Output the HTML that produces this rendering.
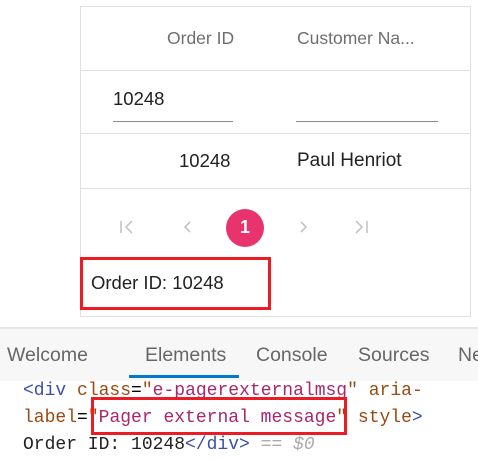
<!DOCTYPE html>
<html><head><style>
body{margin:0;width:478px;height:462px;background:#fff;position:relative;overflow:hidden;font-family:"Liberation Sans",sans-serif}
.a{position:absolute}
.grid{left:80px;top:6px;width:389px;height:309px;border:1px solid #e0e0e0}
.hl{left:81px;width:389px;height:1px;background:#e0e0e0}
.t{font-size:18.5px;color:#212121;white-space:nowrap}
.h{color:#6f6f6f;font-size:17.5px}
.red{border:3px solid #ed1c24;box-sizing:border-box}
.tab{font-size:19.5px;color:#666;top:344px}
.code{font-family:"Liberation Mono",monospace;font-size:18px;white-space:pre;left:23px}
</style></head><body>
<div class="a grid"></div>
<div class="a hl" style="top:70px"></div>
<div class="a hl" style="top:133px"></div>
<div class="a hl" style="top:188px"></div>
<div class="a t h" style="left:167px;top:28px">Order ID</div>
<div class="a t h" style="left:297px;top:28px">Customer Na...</div>
<div class="a t" style="left:113px;top:88px">10248</div>
<div class="a" style="left:113px;top:121px;width:120px;height:1px;background:#8a8a8a"></div>
<div class="a" style="left:296px;top:121px;width:142px;height:1px;background:#8a8a8a"></div>
<div class="a t" style="left:179px;top:150px">10248</div>
<div class="a t" style="left:297px;top:150px;font-size:19px">Paul Henriot</div>
<svg class="a" style="left:118px;top:218px" width="260" height="18" fill="none" stroke="#c4c4c4" stroke-width="1.6">
<path d="M3 3v12M14 3l-6 6 6 6"/>
<path d="M72 4l-5 5 5 5"/>
<path d="M183 4l5 5-5 5"/>
<path d="M238 3l6 6-6 6M249 3v12"/>
</svg>
<div class="a" style="left:226px;top:209px;width:38px;height:38px;border-radius:50%;background:#e8336d;color:#fff;font-weight:bold;font-size:18px;text-align:center;line-height:37px">1</div>
<div class="a red" style="left:80px;top:257px;width:191px;height:53px"></div>
<div class="a t" style="left:91px;top:272px;font-size:18.5px">Order ID: 10248</div>
<div class="a" style="left:0;top:327px;width:478px;height:2px;background:#e6e6e6"></div>
<div class="a" style="left:0;top:329px;width:478px;height:52px;background:#f7f7f7"></div>
<div class="a tab" style="left:7px">Welcome</div>
<div class="a tab" style="left:145px">Elements</div>
<div class="a tab" style="left:256px">Console</div>
<div class="a tab" style="left:358px">Sources</div>
<div class="a tab" style="left:458px">Ne</div>
<div class="a" style="left:129px;top:375px;width:110px;height:3px;background:#0078d4"></div>
<div class="a code" style="top:381px"><span style="color:#3c4fa8">&lt;div</span> <span style="color:#9a4a10">class</span>=<span style="color:#9a4a10">"</span><span style="color:#a8266e">e-pagerexternalmsg</span><span style="color:#9a4a10">"</span> <span style="color:#9a4a10">aria-</span></div>
<div class="a code" style="top:408px"><span style="color:#9a4a10">label</span>=<span style="color:#9a4a10">"</span><span style="color:#a8266e">Pager external message</span><span style="color:#9a4a10">"</span> <span style="color:#9a4a10">style</span><span style="color:#3c4fa8">&gt;</span></div>
<div class="a code" style="top:435px;color:#222">Order ID: 10248<span style="color:#3c4fa8">&lt;/div&gt;</span> <span style="color:#aaa;font-style:italic">== $0</span></div>
<div class="a red" style="left:91px;top:397px;width:256px;height:38px"></div>
</body></html>
